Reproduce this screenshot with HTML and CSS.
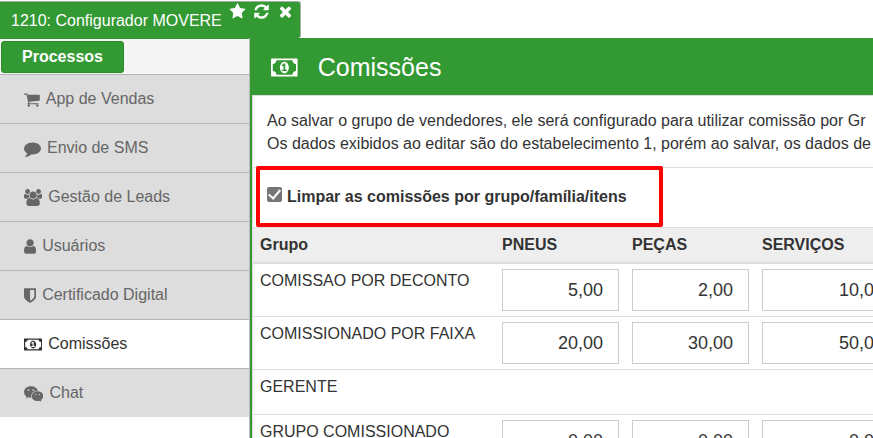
FILE: index.html
```html
<!DOCTYPE html>
<html lang="pt-BR">
<head>
  <meta charset="UTF-8">
  <title>Configurador MOVERE</title>
  <link rel="stylesheet" href="styles.css">
</head>
<body>

  <!-- Icons used more than once -->
  <svg class="sprite" aria-hidden="true">
    <symbol id="money" viewBox="0 0 1920 1792">
      <path d="M768 1152h384v-96h-128v-448h-114l-148 137 77 80q42-37 55-57h2v288h-128v96zm512-256q0 70-21 142t-59.5 134-101.5 101-138 39-138-39-101.5-101-59.5-134-21-142 21-142 59.5-134 101.5-101 138-39 138 39 101.5 101 59.5 134 21 142zm512 256v-512q-106 0-181-75t-75-181h-1152q0 106-75 181t-181 75v512q106 0 181 75t75 181h1152q0-106 75-181t181-75zm128-832v1152q0 26-19 45t-45 19h-1792q-26 0-45-19t-19-45v-1152q0-26 19-45t45-19h1792q26 0 45 19t19 45z"/>
    </symbol>
  </svg>

  <header class="window-tab">
    <span>1210: Configurador MOVERE</span>
    <div class="window-actions">
      <button type="button" aria-label="Favorito">
        <svg viewBox="0 0 1792 1792"><path d="M1728 647q0 22-26 48l-363 354 86 500q1 7 1 20 0 21-10.5 35.5t-30.5 14.5q-19 0-40-12l-449-236-449 236q-22 12-40 12-21 0-31.5-14.5t-10.5-35.5q0-6 2-20l86-500-364-354q-25-27-25-48 0-37 56-46l502-73 225-455q19-41 49-41t49 41l225 455 502 73q56 9 56 46z"/></svg>
      </button>
      <button type="button" aria-label="Atualizar">
        <svg viewBox="0 0 1792 1792"><path d="M1639 1056q0 5-1 7-64 268-268 434.500t-478 166.500q-146 0-282.500-55t-243.500-157l-129 129q-19 19-45 19t-45-19-19-45v-448q0-26 19-45t45-19h448q26 0 45 19t19 45-19 45l-137 137q71 66 161 102t187 36q134 0 250-65t186-179q11-17 53-117 8-23 30-23h192q13 0 22.500 9.500t9.500 22.500zm25-800v448q0 26-19 45t-45 19h-448q-26 0-45-19t-19-45 19-45l138-138q-148-137-349-137-134 0-250 65t-186 179q-11 17-53 117-8 23-30 23h-199q-13 0-22.500-9.500t-9.500-22.500v-7q65-268 270-434.500t480-166.500q146 0 284 55.500t245 156.500l130-129q19-19 45-19t45 19 19 45z"/></svg>
      </button>
      <button type="button" aria-label="Fechar">
        <svg viewBox="0 0 1792 1792"><path d="M1490 1322q0 40-28 68l-136 136q-28 28-68 28t-68-28l-294-294-294 294q-28 28-68 28t-68-28l-136-136q-28-28-28-68t28-68l294-294-294-294q-28-28-28-68t28-68l136-136q28-28 68-28t68 28l294 294 294-294q28-28 68-28t68 28l136 136q28 28 28 68t-28 68l-294 294 294 294q28 28 28 68z"/></svg>
      </button>
    </div>
  </header>

  <div class="layout">
    <aside class="sidebar">
      <div class="sidebar-tabs">
        <button type="button" class="tab">Processos</button>
      </div>
      <nav class="menu">
        <a href="#vendas">
          <svg viewBox="64 0 1664 1792"><path d="M704 1536q0 52-38 90t-90 38-90-38-38-90 38-90 90-38 90 38 38 90zm896 0q0 52-38 90t-90 38-90-38-38-90 38-90 90-38 90 38 38 90zm128-1088v512q0 24-16.500 42.500t-40.500 21.500l-1044 122q13 60 13 70 0 16-24 64h920q26 0 45 19t19 45-19 45-45 19h-1024q-26 0-45-19t-19-45q0-11 8-31.500t16-36 21.500-40 15.500-29.500l-177-823h-204q-26 0-45-19t-19-45 19-45 45-19h256q16 0 28.500 6.500t19.500 15.500 13 24.500 8 26 5.500 29.500 4.500 26h1201q26 0 45 19t19 45z"/></svg>
          App de Vendas
        </a>
        <a href="#sms">
          <svg viewBox="0 0 1792 1792"><path d="M1792 896q0 174-120 321.500t-326 233-450 85.500q-70 0-145-8-198 175-460 242-49 14-114 22-17 2-30.500-9t-17.500-29v-1q-3-4-.5-12t2-10 4.500-9.500l6-9 7-8.500 8-9q7-8 31-34.500t34.500-38 31-39.500 32.500-51 27-59 26-76q-157-89-247.500-220t-90.500-281q0-130 71-248.500t191-204.500 286-136.500 348-50.500q244 0 450 85.500t326 233 120 321.500z"/></svg>
          Envio de SMS
        </a>
        <a href="#leads">
          <svg viewBox="0 0 1920 1792"><path d="M593 896q-162 5-265 128h-134q-82 0-138-40.500t-56-118.500q0-353 124-353 6 0 43.500 21t97.500 42.500 119 21.500q67 0 133-23-5 37-5 66 0 139 81 256zm1071 637q0 120-73 189.500t-194 69.500h-874q-121 0-194-69.500t-73-189.500q0-53 3.500-103.500t14-109 26.500-108.500 43-97.500 62-81 85.500-53.500 111.500-20q10 0 43 21.500t73 48 107 48 135 21.500 135-21.500 107-48 73-48 43-21.500q61 0 111.500 20t85.500 53.500 62 81 43 97.500 26.500 108.500 14 109 3.500 103.500zm-1024-1277q0 106-75 181t-181 75-181-75-75-181 75-181 181-75 181 75 75 181zm704 384q0 159-112.500 271.500t-271.500 112.500-271.500-112.500-112.500-271.500 112.500-271.500 271.500-112.500 271.500 112.500 112.500 271.500zm576 225q0 78-56 118.500t-138 40.500h-134q-103-123-265-128 81-117 81-256 0-29-5-66 66 23 133 23 59 0 119-21.500t97.500-42.500 43.500-21q124 0 124 353zm-128-609q0 106-75 181t-181 75-181-75-75-181 75-181 181-75 181 75 75 181z"/></svg>
          Gestão de Leads
        </a>
        <a href="#usuarios">
          <svg viewBox="256 0 1280 1792"><path d="M1536 1399q0 109-62.500 187t-150.500 78h-854q-88 0-150.500-78t-62.500-187q0-85 8.500-160.500t31.500-152 58.500-131 94-89 134.500-34.500q131 128 313 128t313-128q76 0 134.500 34.500t94 89 58.500 131 31.500 152 8.500 160.500zm-256-887q0 159-112.500 271.500t-271.500 112.500-271.500-112.500-112.500-271.500 112.500-271.500 271.500-112.500 271.500 112.500 112.500 271.500z"/></svg>
          Usuários
        </a>
        <a href="#certificado">
          <svg viewBox="256 0 1280 1792"><path d="M1344 960v-640h-448v1137q119-63 213-137 235-184 235-360zm192-768v768q0 86-33.500 170.500t-83 150-118 127.500-126.500 103-121 77.500-89.500 49.500-42.500 20q-12 6-26 6t-26-6q-16-7-42.500-20t-89.500-49.500-121-77.500-126.500-103-118-127.500-83-150-33.500-170.500v-768q0-26 19-45t45-19h1152q26 0 45 19t19 45z"/></svg>
          Certificado Digital
        </a>
        <a href="#comissoes" class="active">
          <svg viewBox="0 0 1920 1792"><use href="#money"/></svg>
          Comissões
        </a>
        <a href="#chat">
          <svg viewBox="0 0 2048 1792">
            <path d="M720 130C320 130 0 400 0 735q0 290 275 480l-70 210 242-121q150 32 270 31 22 0 65-4-22-75-22-150c0-330 290-580 645-580l60 3C1400 340 1090 130 720 130z"/>
            <path d="M1430 665c-345 0-612 228-612 510s267 512 612 512q105 0 215-30l197 108-54-180q260-185 260-410c0-282-273-510-618-510z"/>
            <g class="eyes">
              <circle cx="475" cy="530" r="90"/>
              <circle cx="975" cy="530" r="90"/>
              <circle cx="1228" cy="1010" r="72"/>
              <circle cx="1628" cy="1010" r="72"/>
            </g>
          </svg>
          Chat
        </a>
      </nav>
    </aside>

    <main class="content">
      <div class="content-header">
        <svg viewBox="0 0 1920 1792" aria-hidden="true"><use href="#money"/></svg>
        <h1>Comissões</h1>
      </div>

      <div class="panel">
        <p class="info">
          Ao salvar o grupo de vendedores, ele será configurado para utilizar comissão por Gr<br>
          Os dados exibidos ao editar são do estabelecimento 1, porém ao salvar, os dados de
        </p>

        <div class="option">
          <input type="checkbox" id="limpar" checked>
          <label for="limpar">Limpar as comissões por grupo/família/itens</label>
          <div class="highlight"></div>
        </div>

        <table class="commissions">
          <thead>
            <tr>
              <th class="group">Grupo</th>
              <th>PNEUS</th>
              <th>PEÇAS</th>
              <th>SERVIÇOS</th>
            </tr>
          </thead>
          <tbody>
            <tr>
              <td>COMISSAO POR DECONTO</td>
              <td><input type="text" value="5,00" aria-label="Pneus"></td>
              <td><input type="text" value="2,00" aria-label="Peças"></td>
              <td><input type="text" class="wide" value="10,00" aria-label="Serviços"></td>
            </tr>
            <tr>
              <td>COMISSIONADO POR FAIXA</td>
              <td><input type="text" value="20,00" aria-label="Pneus"></td>
              <td><input type="text" value="30,00" aria-label="Peças"></td>
              <td><input type="text" class="wide" value="50,00" aria-label="Serviços"></td>
            </tr>
            <tr class="empty">
              <td>GERENTE</td>
              <td></td>
              <td></td>
              <td></td>
            </tr>
            <tr>
              <td>GRUPO COMISSIONADO</td>
              <td><input type="text" value="0,00" aria-label="Pneus"></td>
              <td><input type="text" value="0,00" aria-label="Peças"></td>
              <td><input type="text" class="wide" value="0,00" aria-label="Serviços"></td>
            </tr>
          </tbody>
        </table>
      </div>
    </main>
  </div>

</body>
</html>
```

FILE: styles.css
```css
* {
  box-sizing: border-box;
}

body {
  margin: 0;
  height: 100vh;
  overflow: hidden;
  display: flex;
  flex-direction: column;
  font-family: "Liberation Sans", Arial, sans-serif;
  font-size: 16px;
  color: #333;
  background: #fff;
}

svg {
  fill: currentColor;
  flex: none;
}

button {
  font: inherit;
  cursor: pointer;
}

.sprite {
  display: none;
}

/* Window tab */
.window-tab {
  display: flex;
  align-self: flex-start;
  gap: 7px;
  height: 37px;
  margin-top: 1px;
  padding: 0 6px 0 11px;
  line-height: 37px;
  color: #fff;
  background: #339933;
  border: 1px solid #aaa;
  border-left: 0;
  border-bottom: 0;
  border-radius: 0 3px 3px 0;
}

.window-actions {
  display: flex;
  gap: 7px;
  padding-top: 1px;
}

.window-actions button {
  display: flex;
  height: 17px;
  padding: 0;
  border: 0;
  color: #fff;
  background: none;
}

.window-actions svg {
  width: 17px;
  height: 17px;
}

.layout {
  display: flex;
  flex: 1;
  min-height: 0;
}

/* Sidebar */
.sidebar {
  flex: none;
  width: 250px;
  border-right: 1px solid #bbb;
}

.sidebar-tabs {
  height: 36px;
  padding: 2px 1px;
  background: #f5f5f5;
  border-top: 1px solid #339933;
}

.tab {
  height: 32px;
  width: 123px;
  padding: 0;
  font-weight: bold;
  color: #fff;
  background: #339933;
  border: 1px solid #2b8a2b;
  border-radius: 3px;
}

.menu a {
  display: flex;
  align-items: center;
  gap: 6px;
  height: 49px;
  padding-left: 24px;
  color: #666;
  background: #ddd;
  border-top: 1px solid #b5b5b5;
  text-decoration: none;
}

.menu a.active {
  color: #333;
  background: #fff;
}

.menu svg {
  height: 17px;
}

.eyes {
  fill: #ddd;
}

/* Content */
.content {
  flex: 1;
  min-width: 0;
  overflow: hidden;
  border-left: 2px solid #339933;
}

.content-header {
  display: flex;
  align-items: center;
  gap: 20px;
  height: 57px;
  padding: 2px 0 0 19px;
  color: #fff;
  background: #339933;
}

.content-header svg {
  height: 25px;
}

h1 {
  margin: 0;
  font-size: 25px;
  font-weight: normal;
}

.panel {
  border-top: 1px solid #ddd;
  border-left: 1px solid #ddd;
}

.info {
  margin: 0;
  padding: 13px 0 12px 14px;
  line-height: 23px;
  white-space: nowrap;
}

.option {
  position: relative;
  display: flex;
  align-items: center;
  gap: 5px;
  height: 60px;
  padding: 0 0 2px 14px;
  font-weight: bold;
  border-top: 1px solid #ddd;
}

.option input {
  appearance: none;
  width: 15px;
  height: 15px;
  margin: 0 0 5px;
  border-radius: 2px;
  background: #767676;
  display: grid;
  place-items: center;
}

.option input:checked::before {
  content: "";
  width: 5px;
  height: 10px;
  margin-bottom: 2px;
  border: solid #fff;
  border-width: 0 2px 2px 0;
  transform: rotate(40deg);
}

.highlight {
  position: absolute;
  top: -2px;
  left: 3px;
  width: 407px;
  height: 61px;
  border: 4px solid #ff0000;
  border-radius: 2px;
  pointer-events: none;
}

/* Commission table */
.commissions {
  border-collapse: separate;
  border-spacing: 0;
  width: max-content;
  min-width: 100%;
}

.commissions th {
  height: 37px;
  padding: 0 6px 0 7px;
  text-align: left;
  background: #eee;
  border-top: 1px solid #ddd;
  border-bottom: 2px solid #ddd;
}

.commissions .group {
  width: 242px;
}

.commissions td {
  height: 53px;
  padding: 5px 6px 5px 7px;
  line-height: 23px;
  vertical-align: top;
  border-bottom: 1px solid #ddd;
}

.commissions .empty td {
  height: 45px;
}

.commissions input {
  display: block;
  width: 117px;
  height: 42px;
  padding: 0 15px;
  font: inherit;
  font-size: 18px;
  color: #333;
  text-align: right;
  border: 1px solid #ccc;
}

.commissions .wide {
  width: 138px;
}
```
